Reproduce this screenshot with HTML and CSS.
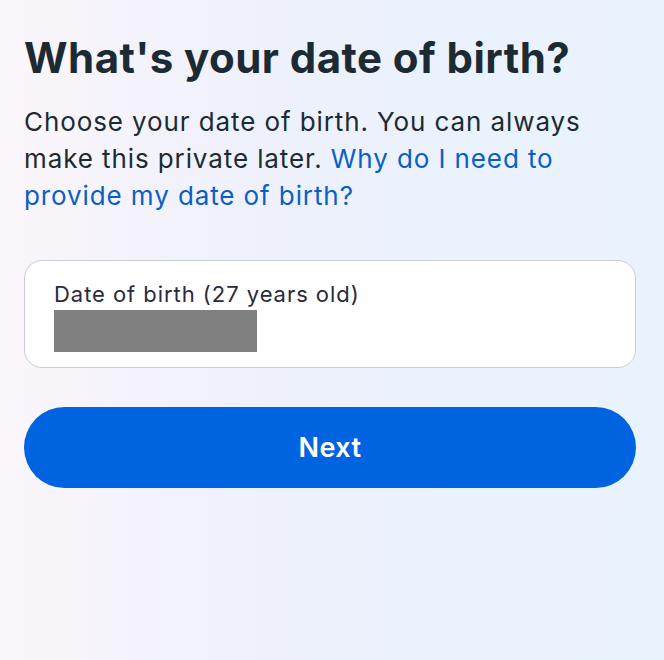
FILE: index.html
```html
<!DOCTYPE html>
<html lang="en">
<head>
<meta charset="utf-8">
<title>Date of birth</title>
<link rel="stylesheet" href="styles.css">
</head>
<body>
<main class="page">
  <h1 class="title">What's your date of birth?</h1>
  <p class="desc">Choose your date of birth. You can always make this private later. <a class="link" href="#">Why do I need to provide my date of birth?</a></p>
  <div class="field">
    <div class="field-label">Date of birth (27 years old)</div>
    <div class="field-value"></div>
  </div>
  <button class="next" type="button">Next</button>
</main>
</body>
</html>
```
FILE: styles.css
```css
html, body {
  margin: 0;
  padding: 0;
  height: 100%;
}
body {
  font-family: Inter, "Noto Sans", "Liberation Sans", sans-serif;
  background: linear-gradient(90deg, #fbf6fa 0%, #eff1fc 35%, #eaf2fd 70%, #e9f3fd 100%);
  color: #1c1e21;
}
.page {
  padding: 33px 28px 0 24px;
}
.title {
  margin: 0;
  font-size: 42px;
  line-height: 50px;
  font-weight: 700;
  color: #1c2b33;
  letter-spacing: 0.45px;
}
.desc {
  margin: 20px 0 0;
  font-size: 26px;
  line-height: 37px;
  font-weight: 400;
  letter-spacing: 0.9px;
  color: #1c2b33;
}
.link {
  color: #0a5fc7;
  text-decoration: none;
}
.field {
  margin-top: 46px;
  background: #fff;
  border: 1px solid #c9ced6;
  border-radius: 18px;
  padding: 20px 29px 15px;
}
.field-label {
  font-size: 22px;
  line-height: 26px;
  letter-spacing: 0.95px;
  color: #2a2a3a;
}
.field-value {
  margin-top: 3px;
  width: 203px;
  height: 42px;
  background: #808080;
}
.next {
  display: block;
  width: 100%;
  margin-top: 39px;
  height: 81px;
  border: none;
  border-radius: 41px;
  background: #0064e0;
  color: #fff;
  font-family: inherit;
  font-size: 27px;
  font-weight: 600;
  letter-spacing: 0.5px;
}
```
